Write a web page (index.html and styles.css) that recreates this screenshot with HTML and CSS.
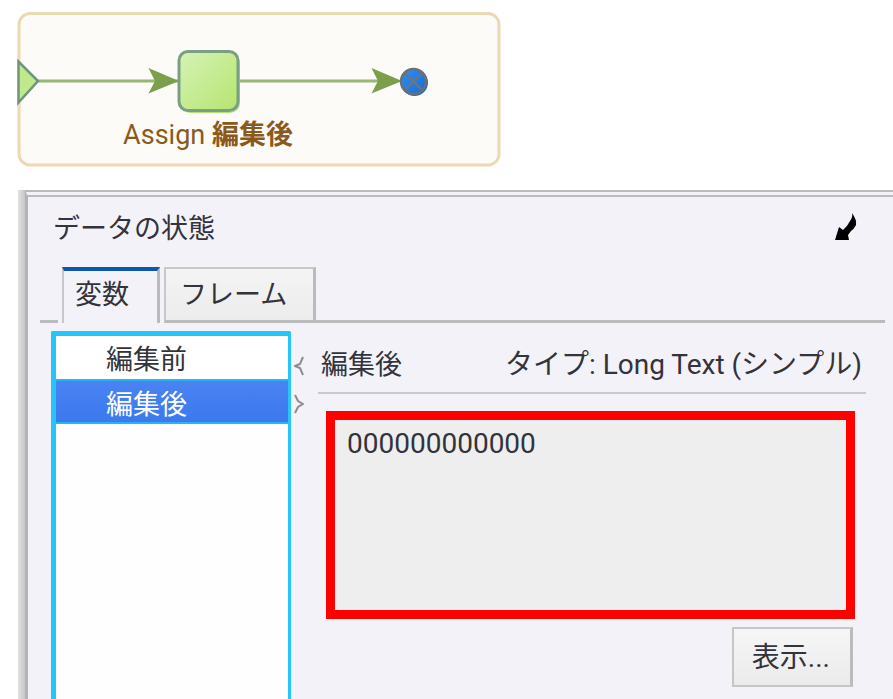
FILE: index.html
```html
<!DOCTYPE html>
<html lang="ja">
<head>
  <meta charset="UTF-8" />
  <meta name="viewport" content="width=device-width, initial-scale=1.0"/>
  <title>データの状態</title>
  <link rel="stylesheet" href="styles.css">
</head>
<body>

  <svg class="diagram" viewBox="0 0 484 155" role="img" aria-label="Assign 編集後">
    <defs>
      <linearGradient id="nodeFill" x1="0" y1="0" x2="1" y2="1">
        <stop offset="0" stop-color="#d6f2b8"/>
        <stop offset="1" stop-color="#b5e56e"/>
      </linearGradient>
      <linearGradient id="endFill" x1="0" y1="0" x2="1" y2="1">
        <stop offset="0" stop-color="#2690ff"/>
        <stop offset="1" stop-color="#1b6bd0"/>
      </linearGradient>
    </defs>
    <rect x="2" y="1.5" width="480" height="151.5" rx="11" fill="#fdfbf7" stroke="#ead9b3" stroke-width="3"/>

    <!-- start node and first link -->
    <path d="M21 69H161" stroke="#98b872" stroke-width="3"/>
    <path d="M1.5 49.5V90.5L21 69Z" fill="#bfe98a" stroke="#6f957c" stroke-width="2.5"/>
    <path d="M131.5 56L162 69L131.5 81.5L138 69Z" fill="#7b9f4b"/>

    <!-- assign node -->
    <rect x="163" y="41" width="60" height="60" rx="10" fill="#b3e376"/>
    <rect x="162" y="39.5" width="59" height="59" rx="9" fill="url(#nodeFill)" stroke="#7a9f82" stroke-width="3"/>

    <!-- second link and end node -->
    <path d="M223 69H366" stroke="#98b872" stroke-width="3"/>
    <path d="M354.5 56L385 69L354.5 81.5L361 69Z" fill="#7b9f4b"/>
    <circle cx="397.5" cy="70.5" r="13.5" fill="#2468bd"/>
    <circle cx="396.5" cy="69.5" r="12.5" fill="url(#endFill)" stroke="#6c7075" stroke-width="2.5"/>
    <path d="M389 62L404 77M404 62L389 77" stroke="#6c7580" stroke-width="2.5"/>

    <text class="node-label" x="191" y="132" text-anchor="middle">Assign <tspan class="node-label-name">編集後</tspan></text>
  </svg>

  <main class="panel">
    <div class="panel-inner">
      <header class="panel-header">
        <h1>データの状態</h1>
        <button class="collapse" type="button" aria-label="閉じる">
          <svg width="22" height="28" viewBox="0 0 22 28">
            <path d="M0 27L4 14L8 17Q12 14 15 8Q18 4 17 0Q22 7 21 12Q19 16 16 18L13 22L14 27Z" fill="#000"/>
          </svg>
        </button>
      </header>

      <div class="tabs" role="tablist">
        <button class="tab active" type="button" role="tab" aria-selected="true">変数</button>
        <button class="tab" type="button" role="tab" aria-selected="false">フレーム</button>
      </div>

      <div class="split">
        <div class="var-list" role="listbox" aria-label="変数">
          <button class="var" type="button" role="option" aria-selected="false">編集前</button>
          <button class="var selected" type="button" role="option" aria-selected="true">編集後</button>
        </div>

        <div class="splitter">
          <svg width="10" height="20" viewBox="0 0 10 20"><path d="M9 1L6 8L1 10L6 12L9 19" /></svg>
          <svg width="10" height="20" viewBox="0 0 10 20"><path d="M1 1L4 7L9 10L4 13L1 19" /></svg>
        </div>

        <section class="details">
          <div class="details-header">
            <label for="value">編集後</label>
            <span class="type">タイプ: Long Text (シンプル)</span>
          </div>
          <textarea class="value" id="value" readonly>000000000000</textarea>
          <button class="show" type="button">表示...</button>
        </section>
      </div>
    </div>
  </main>

</body>
</html>
```
FILE: styles.css
```css
* {
  box-sizing: border-box;
}

body {
  display: flex;
  flex-direction: column;
  height: 100vh;
  margin: 0;
  overflow: hidden;
  background: #fff;
  color: #33333b;
  font-family: Roboto, "Noto Sans CJK JP", sans-serif;
  font-size: 27px;
  line-height: 40px;
}

button, textarea {
  font: inherit;
  color: inherit;
}

.diagram {
  flex: none;
  width: 484px;
  max-width: 100%;
  margin: 12px 0 23px 17px;
}

.node-label {
  fill: #8a5a1c;
  font-size: 27px;
}

.node-label-name {
  font-weight: 700;
}

/* data panel */
.panel {
  flex: 1;
  display: flex;
  min-height: 0;
  margin-left: 18px;
  padding-left: 7px;
  background: linear-gradient(to right, #e2e2e5, #c6c6ca 7px);
}

.panel-inner {
  flex: 1;
  display: flex;
  flex-direction: column;
  min-width: 0;
  border-top: 7px double #bbb;
  border-left: 3px solid #b4b4b4;
  background: #f3f2f8;
}

.panel-header {
  display: flex;
  justify-content: space-between;
  align-items: center;
  padding: 12px 36px 0 25px;
}

.panel-header h1 {
  margin: 0;
  font-size: 27px;
  font-weight: normal;
}

.collapse {
  display: flex;
  padding: 0 0 4px;
  border: none;
  background: none;
}

.tabs {
  display: flex;
  gap: 4px;
  margin: 18px 8px 0 12px;
}

/* the rule under the tabs is broken by the active one */
.tabs::before,
.tabs::after {
  content: "";
  border-bottom: 3px solid #bbb;
}

.tabs::before {
  width: 18px;
}

.tabs::after {
  flex: 1;
  margin-left: -4px;
}

.tab {
  height: 56px;
  padding: 0 26px 0 14px;
  border: 2px solid #c8c8c8;
  border-right: 3px solid #bbb;
  border-bottom: 3px solid #bbb;
  background: linear-gradient(#f4f4f5, #ececec);
}

.tab.active {
  padding: 0 28px 4px 11px;
  border-top: 4px solid #0f56b0;
  border-bottom: none;
  background: #f3f2f8;
}

.split {
  flex: 1;
  display: flex;
  min-height: 0;
  padding: 8px 27px 0 23px;
}

.var-list {
  width: 240px;
  border: 5px solid #27c4f7;
  border-right-width: 3px;
  border-bottom: none;
  border-radius: 2px 2px 0 0;
  background: #fefefe;
}

.var {
  display: block;
  width: 100%;
  height: 43px;
  padding: 4px 0 0 50px;
  border: none;
  background: #fff;
  text-align: left;
}

.var.selected {
  height: 45px;
  border-top: 2px solid #27b4f7;
  border-bottom: 2px solid #27b4f7;
  background: linear-gradient(#4a83f2, #3b79ee);
  color: #fff;
}

.splitter {
  width: 27px;
  padding: 25px 0 0 3px;
}

.splitter svg {
  display: block;
  margin-bottom: 18px;
  fill: none;
  stroke: #8c8c90;
  stroke-width: 2px;
}

.details {
  flex: 1;
  display: flex;
  flex-direction: column;
  min-width: 0;
}

.details-header {
  display: flex;
  justify-content: space-between;
  padding: 14px 4px 7px 3px;
  border-bottom: 2px solid #c9c9cb;
  white-space: nowrap;
}

.type {
  font-size: 28px;
}

.value {
  height: 208px;
  margin: 17px 11px 0 8px;
  padding: 4px 12px;
  border: 9px solid #f00;
  outline: none;
  background: #eee;
  font-size: 28px;
  resize: none;
}

.show {
  align-self: flex-end;
  height: 60px;
  margin: 8px 13px 0 0;
  padding: 2px 20px 0 18px;
  border: 2px solid #c6c6c6;
  border-right: 3px solid #bbb;
  background: linear-gradient(#f6f6f6, #ebebeb);
  font-size: 28px;
}
```
